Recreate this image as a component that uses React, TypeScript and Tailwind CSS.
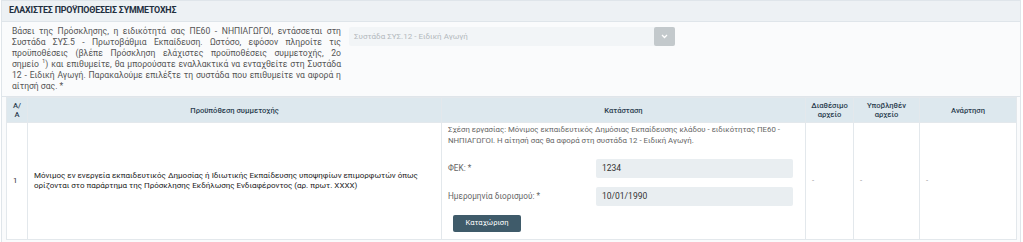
const font = { fontFamily: "Roboto, 'Noto Sans', sans-serif" };

const App = () => {
  return (
    <div className="w-[1023px] h-[242px] overflow-hidden bg-white" style={font}>
      <div className="w-[1020px] ml-[1px] border border-[#dfe5ea] bg-[#fafbfc]">
        {/* Τίτλος ενότητας */}
        <div className="h-[21px] flex items-center px-[7px] bg-[#edf1f4] border-b border-[#dfe5ea]">
          <h3 className="text-[8.9px] font-bold text-[#1f2f3f] tracking-[-0.2px]">
            ΕΛΑΧΙΣΤΕΣ ΠΡΟΫΠΟΘΕΣΕΙΣ ΣΥΜΜΕΤΟΧΗΣ
          </h3>
        </div>

        {/* Επιλογή συστάδας */}
        <div className="flex h-[75px] pl-[10px] pt-[4px] border-b border-[#dfe5ea]">
          <p className="w-[329px] text-[8.6px] leading-[11px] text-[#555] text-justify">
            Βάσει της Πρόσκλησης, η ειδικότητά σας ΠΕ60 - ΝΗΠΙΑΓΩΓΟΙ, εντάσσεται στη Συστάδα ΣΥΣ.5 -
            Πρωτοβάθμια Εκπαίδευση. Ωστόσο, εφόσον πληροίτε τις προϋποθέσεις (βλέπε Πρόσκληση ελάχιστες
            προϋποθέσεις συμμετοχής, 2ο{" "}
            <span className="whitespace-nowrap">
              σημείο <span className="inline-block align-top -mt-[1px] text-[6px] leading-[6px]">1</span>)
            </span>{" "}
            και επιθυμείτε, θα μπορούσατε εναλλακτικά να ενταχθείτε στη Συστάδα 12 - Ειδική Αγωγή.
            Παρακαλούμε επιλέξτε τη συστάδα που επιθυμείτε να αφορά η αίτησή σας. *
          </p>
          <div className="ml-[8px] mt-[1px] w-[326px] h-[19px] flex bg-[#f2f5f7] rounded-[2px]">
            <div className="flex-1 flex items-center px-[5px] text-[8px] text-[#b3b9bd]">
              Συστάδα ΣΥΣ.12 - Ειδική Αγωγή
            </div>
            <div className="w-[21px] h-[19px] flex items-center justify-center bg-[#c3c9cc] rounded-[2px]">
              <svg width="7" height="5" viewBox="0 0 7 5">
                <path d="M1 1l2.5 2.5L6 1" stroke="#fff" strokeWidth="1.3" fill="none" />
              </svg>
            </div>
          </div>
        </div>

        {/* Πίνακας προϋποθέσεων */}
        <div className="px-[4px] pb-[4px]">
          <table className="w-[1010px] border-collapse table-fixed text-[#333]">
            <colgroup>
              <col className="w-[21px]" />
              <col className="w-[414px]" />
              <col className="w-[364px]" />
              <col className="w-[48px]" />
              <col className="w-[66px]" />
              <col className="w-[97px]" />
            </colgroup>
            <thead>
              <tr className="h-[25px] bg-[#dde8ee] text-[7.6px] leading-[9px] text-[#2c3e50]">
                <th className="border border-[#e3e8ec] font-medium">A/<br />A</th>
                <th className="border border-[#e3e8ec] font-medium">Προϋπόθεση συμμετοχής</th>
                <th className="border border-[#e3e8ec] font-medium">Κατάσταση</th>
                <th className="border border-[#e3e8ec] font-medium">Διαθέσιμο<br />αρχείο</th>
                <th className="border border-[#e3e8ec] font-medium">Υποβληθέν<br />αρχείο</th>
                <th className="border border-[#e3e8ec] font-medium">Ανάρτηση</th>
              </tr>
            </thead>
            <tbody>
              <tr className="h-[117px] bg-white text-[7.8px] leading-[10.5px]">
                <td className="border border-[#e3e8ec] px-[6px] align-middle">1</td>
                <td className="border border-[#e3e8ec] pl-[6px] pr-[20px] align-middle text-[#222] text-[8px]">
                  Μόνιμος εν ενεργεία εκπαιδευτικός Δημοσίας ή Ιδιωτικής Εκπαίδευσης υποψηφίων επιμορφωτών όπως
                  ορίζονται στο παράρτημα της Πρόσκλησης Εκδήλωσης Ενδιαφέροντος (αρ. πρωτ. XXXX)
                </td>
                <td className="border border-[#e3e8ec] pl-[6px] pr-[12px] pt-[2px] pb-[5px] align-top text-[#666]">
                  <p>
                    Σχέση εργασίας: Μόνιμος εκπαιδευτικός Δημόσιας Εκπαίδευσης κλάδου - ειδικότητας ΠΕ60 -
                    ΝΗΠΙΑΓΩΓΟΙ. Η αίτησή σας θα αφορά στη συστάδα 12 - Ειδική Αγωγή.
                  </p>
                  <div className="mt-[13px] flex items-center">
                    <label className="w-[148px] text-[8.2px]">ΦΕΚ: *</label>
                    <div className="flex-1 h-[19px] flex items-center px-[6px] bg-[#e9eef1] rounded-[2px] text-[8.5px] text-[#333]">
                      1234
                    </div>
                  </div>
                  <div className="mt-[9px] flex items-center">
                    <label className="w-[148px] text-[8.2px]">Ημερομηνία διορισμού: *</label>
                    <div className="flex-1 h-[19px] flex items-center px-[6px] bg-[#e9eef1] rounded-[2px] text-[8.5px] text-[#333]">
                      10/01/1990
                    </div>
                  </div>
                  <button className="mt-[9px] ml-[5px] w-[68px] h-[17px] bg-[#3f5b6a] text-white text-[7.6px] rounded-[2px]">
                    Καταχώριση
                  </button>
                </td>
                <td className="border border-[#e3e8ec] px-[6px] align-middle text-[#999]">-</td>
                <td className="border border-[#e3e8ec] px-[6px] align-middle text-[#999]">-</td>
                <td className="border border-[#e3e8ec] px-[6px] align-middle text-[#999]">-</td>
              </tr>
            </tbody>
          </table>
        </div>
      </div>
    </div>
  );
};

export default App;
